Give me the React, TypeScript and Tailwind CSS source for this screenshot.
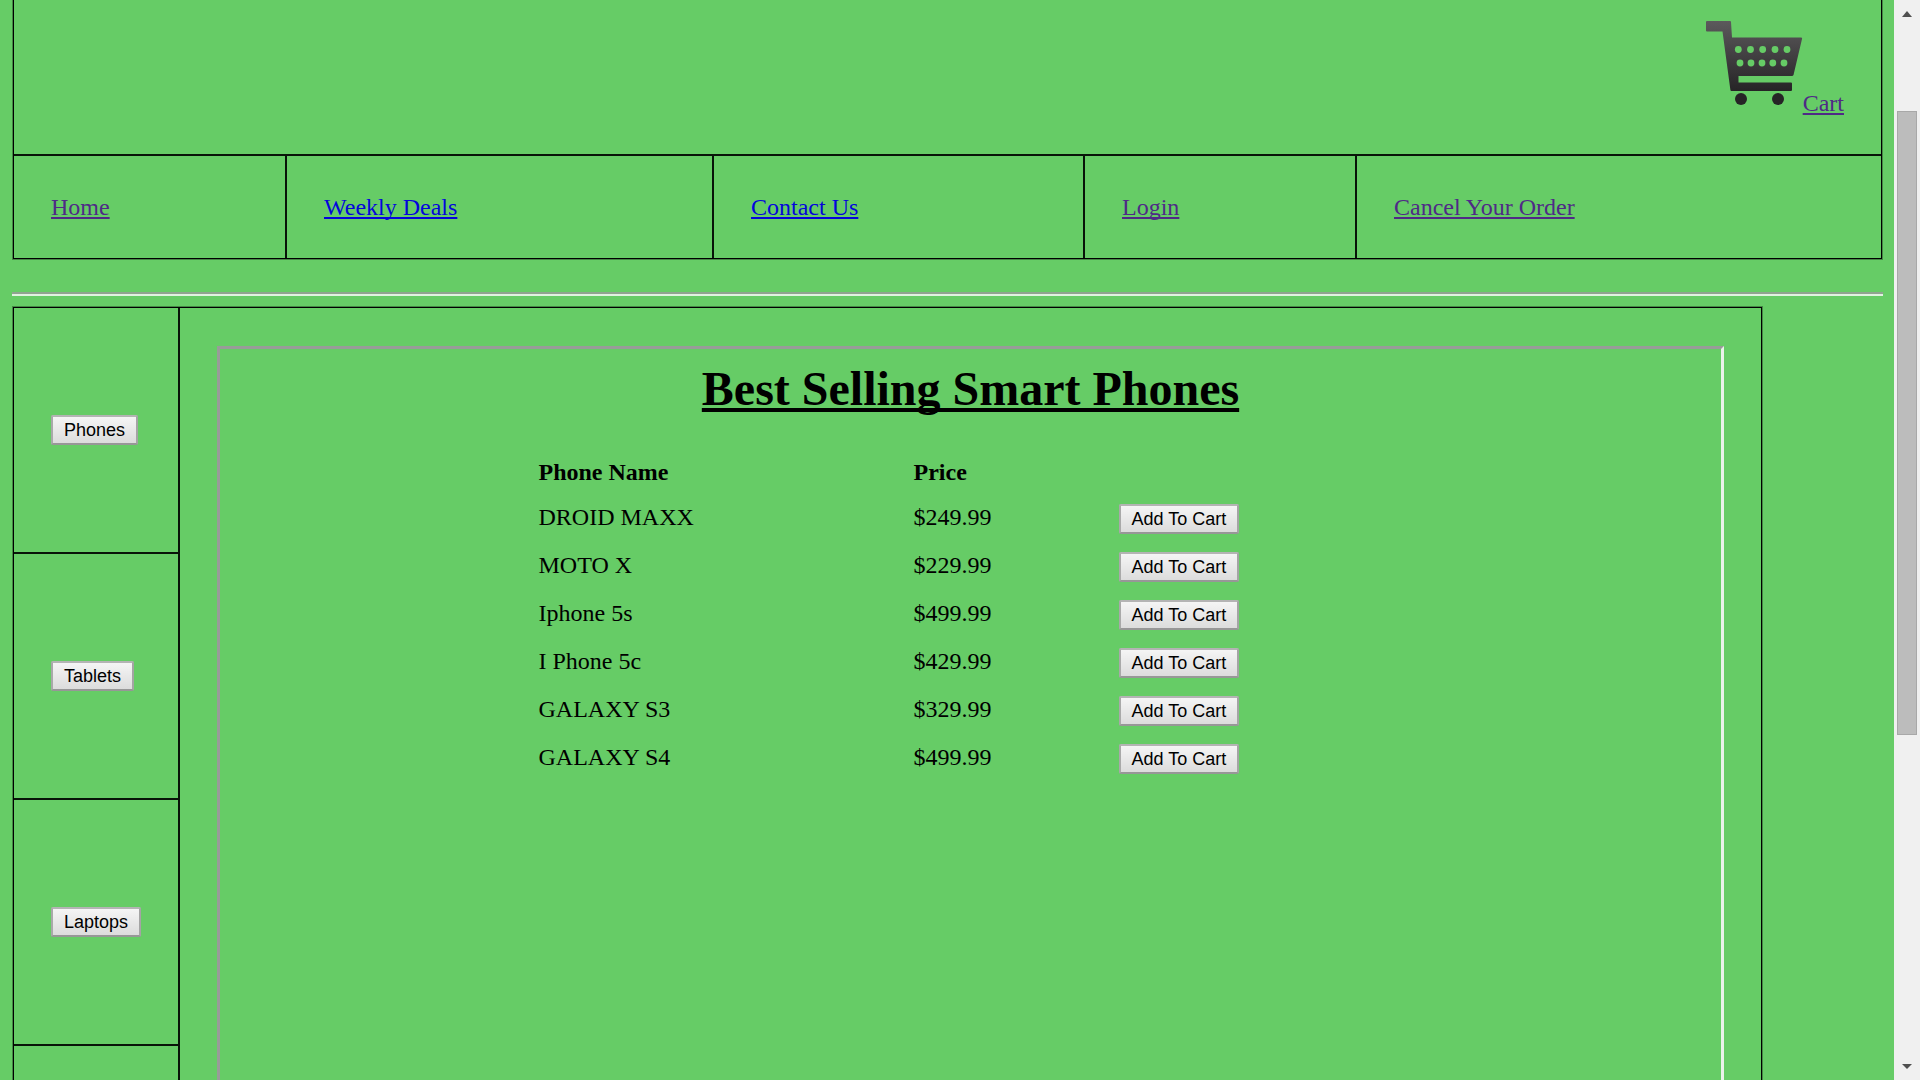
import React from "react";

const navItems = [
  { label: "Home", width: "w-[272px]", tone: "text-[#4f2a86]" },
  { label: "Weekly Deals", width: "w-[427px]", tone: "text-[#0404dc]" },
  { label: "Contact Us", width: "w-[371px]", tone: "text-[#0404dc]" },
  { label: "Login", width: "w-[272px]", tone: "text-[#4f2a86]" },
  { label: "Cancel Your Order", width: "", tone: "text-[#4f2a86]" },
];

const categories = ["Phones", "Tablets", "Laptops"];

const phones = [
  { name: "DROID MAXX", price: "$249.99" },
  { name: "MOTO X", price: "$229.99" },
  { name: "Iphone 5s", price: "$499.99" },
  { name: "I Phone 5c", price: "$429.99" },
  { name: "GALAXY S3", price: "$329.99" },
  { name: "GALAXY S4", price: "$499.99" },
];

function GreyButton({ children }: { children: React.ReactNode }) {
  return (
    <button
      type="button"
      className="block h-[30px] rounded-[2px] border-2 border-t-[#b4b4b4] border-r-[#a4a4a4] border-b-[#979797] border-l-[#a9a9a9] bg-linear-to-b from-[#f5f5f5] to-[#dcdcdc] px-[11px] font-['Liberation_Sans',Arial,sans-serif] text-[18px] leading-[26px] whitespace-nowrap text-black"
    >
      {children}
    </button>
  );
}

function CartIcon() {
  return (
    <svg width="98" height="88" viewBox="0 0 98 88" aria-hidden="true">
      <defs>
        <linearGradient id="cartShade" x1="0" y1="0" x2="0" y2="1">
          <stop offset="0" stopColor="#5c5a5c" />
          <stop offset="1" stopColor="#262426" />
        </linearGradient>
      </defs>
      <path
        fill="url(#cartShade)"
        d="M2 1H25Q26 1 26 2L27 17.500H96Q97.500 17.500 97 19L88.500 55Q88 56 87 56H33.500V62.500H86Q87 62.500 87 63.500V70Q87 71 86 71H26.500Q25.500 71 25.400 70L17.500 11.500H2Q1 11.500 1 10.500V2Q1 1 2 1Z"
      />
      <g fill="#66cc66">
        {[33.3, 45.5, 57.7, 70, 82].map((x) => (
          <circle key={x} cx={x} cy="29.500" r="3.400" />
        ))}
        {[35, 46, 57, 67.8, 79].map((x) => (
          <circle key={x} cx={x} cy="43" r="3.400" />
        ))}
      </g>
      <circle cx="36" cy="79" r="6" fill="#262426" />
      <circle cx="73" cy="79" r="6" fill="#262426" />
    </svg>
  );
}

function Scrollbar() {
  return (
    <div className="flex w-[26px] shrink-0 flex-col items-center justify-between bg-[#f0f0f0]" aria-hidden="true">
      <svg width="12" height="17" viewBox="0 0 12 17">
        <path d="M1 17L6 11L11 17Z" fill="#505050" />
      </svg>
      <div className="mt-[94px] mb-auto h-[624px] w-5 border border-[#a8a8a8] bg-[#bcbcbc]" />
      <svg width="12" height="17" viewBox="0 0 12 17">
        <path d="M1 1L6 6L11 1Z" fill="#505050" />
      </svg>
    </div>
  );
}

export default function App() {
  return (
    <div className="flex h-screen overflow-hidden bg-[#66cc66] font-['Liberation_Serif','Times_New_Roman',serif] text-[24px] leading-[28px] text-black">
      <main className="min-w-0 flex-1 overflow-hidden pr-[11px] pl-3">
        <div className="mx-px border border-t-0 border-black ring-1 ring-[#448844]">
          <table className="w-full table-fixed border-collapse">
            <colgroup>
              {navItems.map((item) => (
                <col key={item.label} className={item.width} />
              ))}
            </colgroup>
            <tbody>
              <tr>
                <td colSpan={5} className="h-[155px] pt-5 pr-[37px] align-top">
                  <a
                    href="#cart"
                    className="flex items-end justify-end text-[#4f2a86] underline decoration-2 underline-offset-2 [text-decoration-skip-ink:none]"
                  >
                    <CartIcon />
                    <span className="-mb-[9px]">Cart</span>
                  </a>
                </td>
              </tr>
              <tr>
                {navItems.map((item) => (
                  <td
                    key={item.label}
                    className="h-[103px] border-t-2 border-r-2 border-[#081408] px-[37px] last:border-r-0"
                  >
                    <a
                      href="#nav"
                      className={`${item.tone} underline decoration-2 underline-offset-2 [text-decoration-skip-ink:none]`}
                    >
                      {item.label}
                    </a>
                  </td>
                ))}
              </tr>
            </tbody>
          </table>
        </div>

        <hr className="mt-[33px] mb-[11px] border-t-2 border-b-2 border-t-[#8fa48f] border-b-[#e0f2e0]" />

        <div className="mx-px flex w-[1749px] max-w-full border border-black ring-1 ring-[#448844]">
          <nav aria-label="Categories" className="w-[164px] shrink-0">
            {categories.map((label) => (
              <div key={label} className="flex h-[246px] items-center border-b-2 border-[#081408] pl-[37px]">
                <GreyButton>{label}</GreyButton>
              </div>
            ))}
            <div className="h-[246px]" />
          </nav>
          <section className="min-w-0 flex-1 border-l-2 border-[#081408] px-[37px] pt-[38px]">
            <div className="h-full border-3 border-t-[#989c98] border-r-[#eaf2ea] border-b-[#eaf2ea] border-l-[#989c98] pt-3">
              <h1 className="text-center text-[48px] leading-[56px] font-bold underline decoration-4 underline-offset-3 [text-decoration-skip-ink:none]">
                Best Selling Smart Phones
              </h1>
              <table className="mx-auto mt-[34px] w-[864px] border-collapse text-left">
                <thead>
                  <tr className="h-[42px]">
                    <th scope="col" className="w-[375px] font-bold">Phone Name</th>
                    <th scope="col" className="w-[205px] font-bold">Price</th>
                    <td />
                  </tr>
                </thead>
                <tbody>
                  {phones.map((phone) => (
                    <tr key={phone.name} className="h-12">
                      <td>{phone.name}</td>
                      <td>{phone.price}</td>
                      <td className="pt-[3px]">
                        <GreyButton>Add To Cart</GreyButton>
                      </td>
                    </tr>
                  ))}
                </tbody>
              </table>
            </div>
          </section>
        </div>
      </main>
      <Scrollbar />
    </div>
  );
}
